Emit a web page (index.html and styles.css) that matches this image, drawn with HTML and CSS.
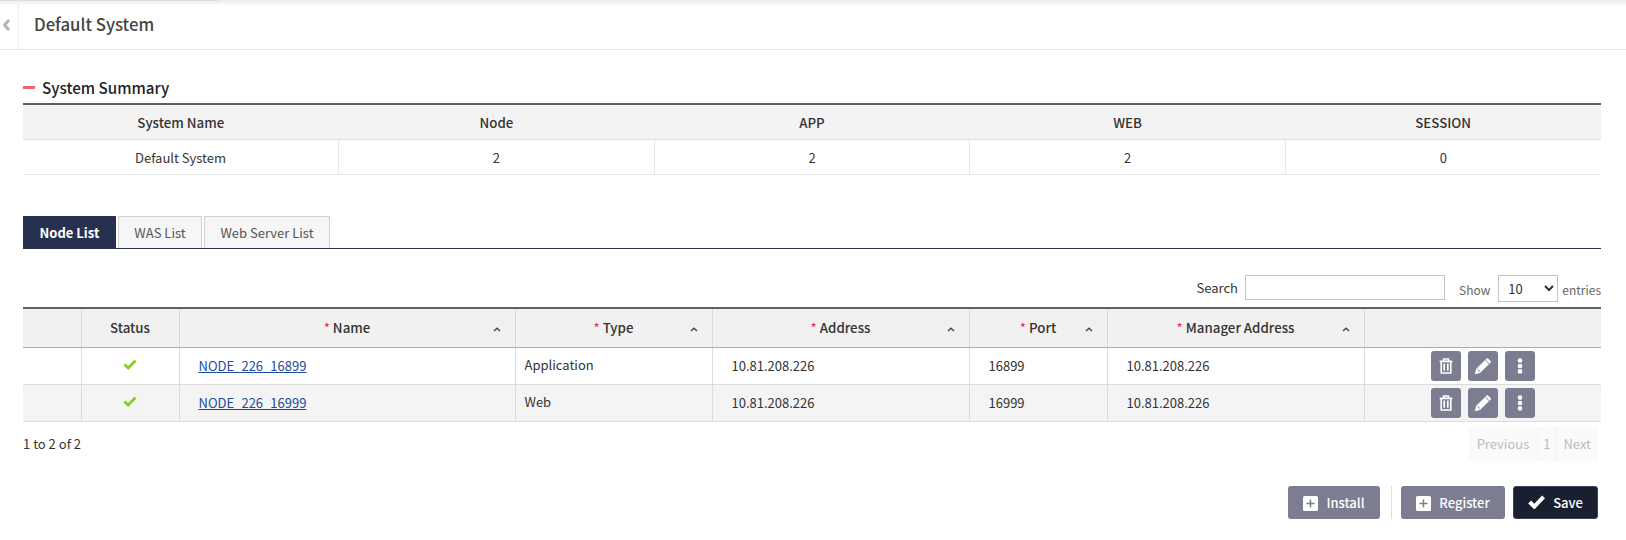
FILE: index.html
```html
<!DOCTYPE html>
<html lang="en">
<head>
    <meta charset="UTF-8">
    <meta name="viewport" content="width=device-width, initial-scale=1.0">
    <title>Default System</title>
    <link rel="stylesheet" href="styles.css">
</head>
<body>
    <header class="top-bar">
        <div class="side-toggle">
            <svg width="8" height="12" viewBox="0 0 8 12"><path d="M6 1 1.5 6 6 11" fill="none" stroke="#b4b4bc" stroke-width="3"/></svg>
        </div>
        <h1 class="page-title">Default System</h1>
    </header>

    <main class="content">
        <h2 class="section-title">System Summary</h2>
        <table class="summary-table">
            <tr>
                <th>System Name</th>
                <th>Node</th>
                <th>APP</th>
                <th>WEB</th>
                <th>SESSION</th>
            </tr>
            <tr>
                <td>Default System</td>
                <td>2</td>
                <td>2</td>
                <td>2</td>
                <td>0</td>
            </tr>
        </table>

        <nav class="tabs">
            <a class="tab active">Node List</a>
            <a class="tab">WAS List</a>
            <a class="tab">Web Server List</a>
        </nav>

        <div class="table-tools">
            <label class="search-label">Search</label>
            <input class="search-input" type="text">
            <span class="show-label">Show</span>
            <select class="page-size"><option>10</option></select>
            <span class="entries-label">entries</span>
        </div>

        <table class="node-table">
            <colgroup>
                <col class="c-check"><col class="c-status"><col class="c-name"><col class="c-type">
                <col class="c-address"><col class="c-port"><col class="c-manager"><col class="c-actions">
            </colgroup>
            <thead>
                <tr>
                    <th></th>
                    <th>Status</th>
                    <th class="sortable"><i class="req">*</i> Name<svg class="sort" viewBox="0 0 8 5"><path d="M1 4 4 1.2 7 4" fill="none" stroke="#444" stroke-width="1.3"/></svg></th>
                    <th class="sortable"><i class="req">*</i> Type<svg class="sort" viewBox="0 0 8 5"><path d="M1 4 4 1.2 7 4" fill="none" stroke="#444" stroke-width="1.3"/></svg></th>
                    <th class="sortable"><i class="req">*</i> Address<svg class="sort" viewBox="0 0 8 5"><path d="M1 4 4 1.2 7 4" fill="none" stroke="#444" stroke-width="1.3"/></svg></th>
                    <th class="sortable"><i class="req">*</i> Port<svg class="sort" viewBox="0 0 8 5"><path d="M1 4 4 1.2 7 4" fill="none" stroke="#444" stroke-width="1.3"/></svg></th>
                    <th class="sortable"><i class="req">*</i> Manager Address<svg class="sort" viewBox="0 0 8 5"><path d="M1 4 4 1.2 7 4" fill="none" stroke="#444" stroke-width="1.3"/></svg></th>
                    <th></th>
                </tr>
            </thead>
            <tbody>
                <tr>
                    <td></td>
                    <td class="center"><svg class="status-ok" width="14" height="11" viewBox="0 0 14 11"><path d="M1.5 5.5 5.2 9 12.5 1.5" fill="none" stroke="#7ed321" stroke-width="2.8"/></svg></td>
                    <td class="name-cell"><a class="node-link">NODE_226_16899</a></td>
                    <td class="type-cell">Application</td>
                    <td class="pad-address">10.81.208.226</td>
                    <td class="pad-port">16899</td>
                    <td class="pad-manager">10.81.208.226</td>
                    <td class="actions">
                        <button class="icon-btn"><svg width="14" height="16" viewBox="0 0 14 16"><path d="M4.6 2.8V1h4.8v1.8M.6 3.4h12.8M2.2 3.4v11.6h9.6V3.4" fill="none" stroke="#fff" stroke-width="1.6"/><path d="M5.2 5.6v7.2M8.8 5.6v7.2" stroke="#fff" stroke-width="1.7"/></svg></button>
                        <button class="icon-btn"><svg width="18" height="18" viewBox="0 0 18 18"><path d="M.8 17.2 2 12 12.6 1.4a1 1 0 0 1 1.4 0l2.6 2.6a1 1 0 0 1 0 1.4L6 16z" fill="#fff"/><path d="M3.4 12 6 14.6M11.4 3 15 6.6" stroke="#7d7d91" stroke-width="1"/></svg></button>
                        <button class="icon-btn"><svg width="6" height="16" viewBox="0 0 6 16"><circle cx="3" cy="2.6" r="2.3" fill="#fff"/><circle cx="3" cy="8" r="2.3" fill="#fff"/><circle cx="3" cy="13.4" r="2.3" fill="#fff"/></svg></button>
                    </td>
                </tr>
                <tr class="alt">
                    <td></td>
                    <td class="center"><svg class="status-ok" width="14" height="11" viewBox="0 0 14 11"><path d="M1.5 5.5 5.2 9 12.5 1.5" fill="none" stroke="#7ed321" stroke-width="2.8"/></svg></td>
                    <td class="name-cell"><a class="node-link">NODE_226_16999</a></td>
                    <td class="type-cell">Web</td>
                    <td class="pad-address">10.81.208.226</td>
                    <td class="pad-port">16999</td>
                    <td class="pad-manager">10.81.208.226</td>
                    <td class="actions">
                        <button class="icon-btn"><svg width="14" height="16" viewBox="0 0 14 16"><path d="M4.6 2.8V1h4.8v1.8M.6 3.4h12.8M2.2 3.4v11.6h9.6V3.4" fill="none" stroke="#fff" stroke-width="1.6"/><path d="M5.2 5.6v7.2M8.8 5.6v7.2" stroke="#fff" stroke-width="1.7"/></svg></button>
                        <button class="icon-btn"><svg width="18" height="18" viewBox="0 0 18 18"><path d="M.8 17.2 2 12 12.6 1.4a1 1 0 0 1 1.4 0l2.6 2.6a1 1 0 0 1 0 1.4L6 16z" fill="#fff"/><path d="M3.4 12 6 14.6M11.4 3 15 6.6" stroke="#7d7d91" stroke-width="1"/></svg></button>
                        <button class="icon-btn"><svg width="6" height="16" viewBox="0 0 6 16"><circle cx="3" cy="2.6" r="2.3" fill="#fff"/><circle cx="3" cy="8" r="2.3" fill="#fff"/><circle cx="3" cy="13.4" r="2.3" fill="#fff"/></svg></button>
                    </td>
                </tr>
            </tbody>
        </table>

        <div class="table-foot">
            <span class="table-info">1 to 2 of 2</span>
            <div class="pager">
                <span class="pager-item">Previous</span>
                <span class="pager-item pager-num">1</span>
                <span class="pager-item pager-next">Next</span>
            </div>
        </div>

        <div class="form-actions">
            <button class="btn btn-grey"><svg class="plus-box" width="15" height="15" viewBox="0 0 15 15"><rect width="15" height="15" rx="1.5" fill="#fff"/><path d="M7.5 3.5v8M3.5 7.5h8" stroke="#7d7d91" stroke-width="1.5"/></svg>Install</button>
            <span class="btn-divider"></span>
            <button class="btn btn-grey btn-wide"><svg class="plus-box" width="15" height="15" viewBox="0 0 15 15"><rect width="15" height="15" rx="1.5" fill="#fff"/><path d="M7.5 3.5v8M3.5 7.5h8" stroke="#7d7d91" stroke-width="1.5"/></svg>Register</button>
            <button class="btn btn-dark"><svg width="17" height="14" viewBox="0 0 17 14"><path d="M1.6 7 6.3 11.6 15.6 1.8" fill="none" stroke="#fff" stroke-width="4"/></svg>Save</button>
        </div>
    </main>
</body>
</html>
```

FILE: styles.css
```css
body { margin: 0; background: #fff; color: #333; font-family: "Noto Sans CJK KR", "Noto Sans", sans-serif; font-size: 13px; }

.top-bar { display: flex; align-items: stretch; height: 49px; border-bottom: 1px solid #e8e8e8; background: linear-gradient(#ddd, #ddd) no-repeat 0 0 / 218px 1px, linear-gradient(#ececec, #fff 6px); }
.side-toggle { display: flex; align-items: center; justify-content: center; width: 14px; padding-right: 4px; border-right: 1px solid #eee; }
.page-title { margin: 0 0 0 15px; font-size: 16.7px; font-weight: 500; line-height: 48px; color: #444; }

.content { padding: 0 25px 0 23px; }

.section-title { display: flex; align-items: center; gap: 7px; box-sizing: border-box; margin: 25px 0 0; height: 28px; padding-bottom: 4px; font-size: 15.2px; font-weight: 500; color: #222; }
.section-title::before { content: ""; width: 12px; height: 3px; background: #f0636b; }

.summary-table { width: 100%; table-layout: fixed; border-collapse: collapse; border-top: 2px solid #5f5f6b; }
.summary-table th { height: 34px; padding: 0; background: #f3f3f3; font-size: 13.3px; font-weight: 500; color: #333; border-bottom: 1px solid #e0e0e0; }
.summary-table td { height: 34px; padding: 0; text-align: center; border-bottom: 1px solid #e8e8e8; border-left: 1px solid #e8e8e8; }
.summary-table td:first-child { border-left: none; }

.tabs { display: flex; gap: 2px; margin-top: 41px; height: 32px; border-bottom: 1px solid #2a3350; }
.tab { display: flex; align-items: center; justify-content: center; width: 84px; box-sizing: border-box; border: 1px solid #d2d2d2; border-bottom: none; background: #f6f6f6; color: #555; }
.tab:nth-child(3) { width: 126px; }
.tab.active { width: 93px; background: #27314f; border-color: #27314f; color: #fff; font-weight: 700; }

.table-tools { display: flex; align-items: center; justify-content: flex-end; margin-top: 26px; height: 26px; }
.search-label { margin-right: 7px; margin-bottom: 2px; }
.search-input { box-sizing: border-box; width: 200px; height: 25px; margin: 0 14px 2px 0; border: 1px solid #c4c4c4; background: #fff; padding: 0 4px; }
.show-label, .entries-label { color: #666; margin-top: 2px; font-size: 12px; }
.show-label { margin-right: 8px; }
.page-size { box-sizing: border-box; width: 60px; height: 27px; margin-right: 4px; padding-left: 5px; border: 1px solid #c4c4c4; border-radius: 0; background: #fff; font-family: inherit; font-size: 13px; color: #333; }

.node-table { width: 100%; table-layout: fixed; border-collapse: collapse; margin-top: 6px; border-top: 2px solid #5f5f6b; }
.c-check { width: 58px; }
.c-status { width: 98px; }
.c-name { width: 336px; }
.c-type { width: 197px; }
.c-address { width: 257px; }
.c-port { width: 138px; }
.c-manager { width: 257px; }
.node-table th { position: relative; box-sizing: border-box; height: 39px; padding: 0; background: #f1f1f1; font-size: 13.3px; font-weight: 500; color: #333; border-bottom: 1px solid #a9adbf; border-left: 1px solid #d9d9d9; }
.node-table th:first-child, .node-table td:first-child { border-left: none; }
.node-table td { box-sizing: border-box; height: 37px; padding: 0; border-bottom: 1px solid #dcdcdc; border-left: 1px solid #dcdcdc; }
.alt td { background: #f4f4f4; }
.sort { position: absolute; right: 14px; top: 18px; width: 8px; height: 5px; }
.req { font-style: normal; color: #e8294f; font-weight: 400; }
.center { text-align: center; }
.status-ok { display: block; margin: -2px auto 0; }
.node-table .name-cell { padding-left: 19px; }
.node-table .type-cell { padding: 0 0 2px 9px; }
.node-table .pad-address { padding-left: 19px; }
.node-table .pad-port, .node-table .pad-manager { padding-left: 19px; }
.node-link { color: #1c4ba0; text-decoration: underline; }

.actions { text-align: center; font-size: 0; }
.icon-btn { display: inline-flex; align-items: center; justify-content: center; width: 30px; height: 30px; margin: 0 3.5px; padding: 0; border: none; border-radius: 3px; background: #7d7d91; vertical-align: middle; }

.table-foot { display: flex; justify-content: space-between; align-items: center; margin-top: 5px; height: 34px; }
.pager { display: flex; height: 34px; margin-right: 3px; background: #fafafa; border-radius: 3px; color: #bdbdbd; }
.pager-item { display: flex; align-items: center; padding: 0 7.5px; border-left: 1px solid #f3f3f3; }
.pager-item:first-child { border-left: none; }
.pager-num { padding: 0 5.5px; }
.pager-next { padding: 0 7px 0 6.5px; }

.form-actions { display: flex; align-items: stretch; justify-content: flex-end; margin: 25px 3px 0 0; height: 33px; }
.btn { display: inline-flex; align-items: center; justify-content: center; gap: 8px; padding: 0; border: none; border-radius: 3px; font-family: inherit; font-size: 13px; font-weight: 500; color: #fff; }
.plus-box { margin-top: 3px; }
.btn-grey { width: 92px; background: #7d7d91; }
.btn-wide { width: 104px; }
.btn-dark { width: 85px; margin-left: 8px; background: #18202f; border: 1px solid #3a4258; }
.btn-divider { width: 1px; margin: 0 9px 0 11px; background: #dedede; }
```
